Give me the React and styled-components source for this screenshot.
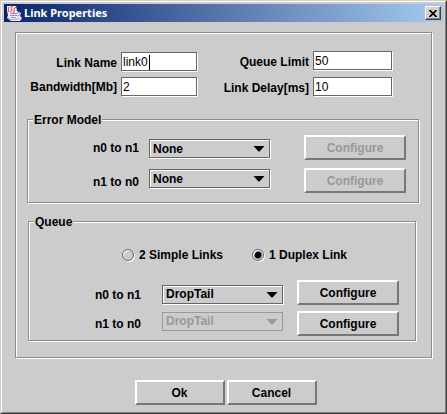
import { useState } from "react"
import styled, { createGlobalStyle, css } from "styled-components"

const GlobalStyle = createGlobalStyle`
  * {
    box-sizing: border-box;
  }

  body {
    margin: 0;
    background: #ccc;
  }

  body, button, input, select {
    font-family: "Liberation Sans", Arial, sans-serif;
    font-size: 12px;
    color: #000;
  }
`;

// dark line with a white one just below and to the right of it
const etched = css`
  border: 1px solid #8c8c8c;
  box-shadow: 1px 1px 0 #fff, inset 1px 1px 0 #fff;
`;

const Window = styled.div`
  background: #ccc;
  border: 1px solid;
  border-color: #d4d0c8 #404040 #404040 #d4d0c8;
`;

const Frame = styled.div`
  border: 1px solid;
  border-color: #fff #808080 #808080 #fff;
  padding: 2px 2px 7px;
`;

const TitleBar = styled.header`
  display: flex;
  align-items: center;
  height: 18px;
  padding: 0 2px;
  background: linear-gradient(to right, #0a246a, #a6caf0);

  h1 {
    flex: 1;
    margin: 0 0 0 2px;
    color: #fff;
    font: bold 11px/18px "Noto Sans", Tahoma, sans-serif;
  }
`;

const CloseButton = styled.button`
  display: flex;
  align-items: center;
  justify-content: center;
  width: 16px;
  height: 14px;
  padding: 0;
  background: #d4d0c8;
  border: 1px solid;
  border-color: #fff #404040 #404040 #fff;
  box-shadow: inset -1px -1px 0 #808080;
`;

const Panel = styled.main`
  ${etched}
  margin: 10px 11px 0;
  padding: 17px 12px 16px 11px;
`;

const FormGrid = styled.div`
  display: grid;
  align-items: center;
  grid-template-columns: 90fr 4fr 76fr 112fr 4fr 79fr 27fr;
  padding-bottom: 13px;

  > :nth-child(2) {
    grid-column: 3;
  }

  > :nth-child(3) {
    grid-column: 4;
  }

  > :nth-child(4) {
    grid-column: 6;
  }
`;

const Group = styled.fieldset`
  ${etched}
  min-width: 0;
  margin: ${(props) => props.$margin || "0"};
  padding: ${(props) => props.$padding};

  legend {
    margin-left: 5px;
    padding: 2px 1px 0;
    background: #ccc;
    font-weight: bold;
    line-height: 15px;
  }
`;

const LinkGrid = styled.div`
  display: grid;
  align-items: center;
  grid-template-columns: ${(props) => props.$columns};

  > :nth-child(1) {
    grid-column: label;
  }

  > :nth-child(2) {
    grid-column: field;
  }

  > :nth-child(3) {
    grid-column: action;
  }
`;

const Stack = styled.div`
  display: flex;
  flex-direction: column;
  gap: ${(props) => props.$gap}px;
  min-width: 0;
`;

const Label = styled.label`
  padding-top: 2px;
  font-weight: bold;
  line-height: 20px;
  text-align: right;
  white-space: nowrap;
`;

const TextBox = styled.div`
  position: relative;
  height: 20px;

  input {
    width: 100%;
    height: 19px;
    padding: 1px 1px 0;
    background: #fff;
    border: 1px solid #666;
    border-radius: 0;
    box-shadow: 1px 1px 0 #fff;
    outline: none;
    display: block;
  }
`;

const Caret = styled.span`
  position: absolute;
  top: 3px;
  left: 28px;
  width: 1px;
  height: 15px;
  background: #000;
`;

const SelectBox = styled.div`
  position: relative;
  height: 20px;

  select {
    appearance: none;
    display: block;
    width: 100%;
    height: 19px;
    padding: 0 20px 0 3px;
    background: #ccc;
    border: 1px solid #666;
    border-radius: 0;
    box-shadow: 1px 1px 0 #fff, inset 1px 1px 0 #fff;
    font-weight: bold;
    outline: none;
  }

  select:disabled {
    border-color: #999;
    box-shadow: none;
    color: #999;
    opacity: 1;
  }

  svg {
    position: absolute;
    top: 7px;
    right: 5px;
    pointer-events: none;
  }
`;

const Button = styled.button`
  height: 25px;
  padding: 0;
  background: #ccc;
  border: 2px solid;
  border-color: #fff #777 #777 #fff;
  border-radius: 0;
  font-weight: bold;

  &:disabled {
    color: #999;
  }
`;

const RadioRow = styled.div`
  display: grid;
  grid-template-columns: 93fr 130fr 163fr;
  margin-bottom: 15px;

  label:first-child {
    grid-column: 2;
  }
`;

const Radio = styled.label`
  display: flex;
  align-items: center;
  gap: 5px;
  font-weight: bold;
  line-height: 20px;
  white-space: nowrap;

  input {
    appearance: none;
    width: 12px;
    height: 12px;
    margin: 0;
    border: 1px solid #666;
    border-radius: 50%;
    box-shadow: 1px 1px 0 #fff, inset 1px 1px 0 #fff;
  }

  input:checked {
    background: radial-gradient(circle, #000 3px, transparent 4px);
  }
`;

const Footer = styled.footer`
  display: flex;
  justify-content: center;
  gap: 2px;
  margin-top: 22px;
  padding-left: 4px;

  button {
    flex: 0 1 90px;
  }
`;

const JavaIcon = () => (
  <svg width="16" height="16" viewBox="0 0 16 16" aria-hidden="true">
    <path d="M1 1h9l1 5 4 2-1 3 2 2-2 3H5l-4-3 1-3-1-4z" fill="#f4eef6" />
    <path
      d="M7 1C2 4 9 4 4 7M10 2C5 5 11 5 7 8M3 2C1 5 4 4 2 7"
      fill="none"
      stroke="#e4566a"
      strokeWidth="1.2"
    />
    <path
      d="M4 8.5h7M4 10.5h7M5 12.5h5M11 8c4-1 3 3 0 3"
      fill="none"
      stroke="#8a90c8"
    />
    <path d="M2 13c2 2 9 2 12 0" fill="none" stroke="#98a0d0" />
  </svg>
)

const TextField = ({ id, value, caret }) => (
  <TextBox>
    <input id={id} defaultValue={value} />
    {caret && <Caret />}
  </TextBox>
)

const Select = ({ id, options, disabled }) => (
  <SelectBox>
    <select id={id} disabled={disabled}>
      {options.map((option) => (
        <option key={option}>{option}</option>
      ))}
    </select>
    <svg width="12" height="6" viewBox="0 0 12 6" aria-hidden="true">
      <path d="M0.5 0h11L6.5 5.5h-1z" fill={disabled ? "#999" : "#000"} />
    </svg>
  </SelectBox>
)

const App = () => {
  const [mode, setMode] = useState("duplex")

  return (
    <Window>
      <GlobalStyle />
      <Frame>
        <TitleBar>
          <JavaIcon />
          <h1>Link Properties</h1>
          <CloseButton aria-label="Close">
            <svg width="8" height="7" viewBox="0 0 8 7">
              <path d="M0.5 0l7 7M7.5 0l-7 7" stroke="#000" strokeWidth="1.7" />
            </svg>
          </CloseButton>
        </TitleBar>

        <Panel>
          <FormGrid>
            <Stack $gap={2}>
              <Label htmlFor="name">Link Name</Label>
              <Label htmlFor="bandwidth">Bandwidth[Mb]</Label>
            </Stack>
            <Stack $gap={5}>
              <TextField id="name" value="link0" caret />
              <TextField id="bandwidth" value="2" />
            </Stack>
            <Stack $gap={4}>
              <Label htmlFor="limit">Queue Limit</Label>
              <Label htmlFor="delay">Link Delay[ms]</Label>
            </Stack>
            <Stack $gap={6}>
              <TextField id="limit" value="50" />
              <TextField id="delay" value="10" />
            </Stack>
          </FormGrid>

          <Group $padding="7px 0 9px">
            <legend>Error Model</legend>
            <LinkGrid $columns="[label] 111fr 10fr [field] 121fr 34fr [action] 102fr 12fr">
              <Stack $gap={12}>
                <Label htmlFor="error01">n0 to n1</Label>
                <Label htmlFor="error10">n1 to n0</Label>
              </Stack>
              <Stack $gap={10}>
                <Select id="error01" options={["None"]} />
                <Select id="error10" options={["None"]} />
              </Stack>
              <Stack $gap={8}>
                <Button disabled>Configure</Button>
                <Button disabled>Configure</Button>
              </Stack>
            </LinkGrid>
          </Group>

          <Group $margin="10px 3px 0 1px" $padding="15px 0 4px">
            <legend>Queue</legend>
            <RadioRow>
              <Radio>
                <input
                  type="radio"
                  name="mode"
                  checked={mode === "simple"}
                  onChange={() => setMode("simple")}
                />
                2 Simple Links
              </Radio>
              <Radio>
                <input
                  type="radio"
                  name="mode"
                  checked={mode === "duplex"}
                  onChange={() => setMode("duplex")}
                />
                1 Duplex Link
              </Radio>
            </RadioRow>
            <LinkGrid $columns="[label] 112fr 21fr [field] 121fr 14fr [action] 102fr 16fr">
              <Stack $gap={7}>
                <Label htmlFor="queue01">n0 to n1</Label>
                <Label htmlFor="queue10">n1 to n0</Label>
              </Stack>
              <Stack $gap={7}>
                <Select id="queue01" options={["DropTail"]} />
                <Select id="queue10" options={["DropTail"]} disabled={mode === "duplex"} />
              </Stack>
              <Stack $gap={6}>
                <Button>Configure</Button>
                <Button>Configure</Button>
              </Stack>
            </LinkGrid>
          </Group>
        </Panel>

        <Footer>
          <Button>Ok</Button>
          <Button>Cancel</Button>
        </Footer>
      </Frame>
    </Window>
  )
}

export default App
